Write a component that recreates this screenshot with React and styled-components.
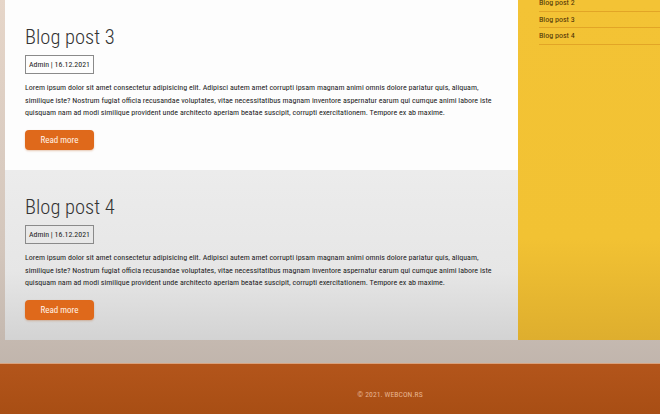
import React from "react";
import styled, { createGlobalStyle } from "styled-components";

const posts = [
  { id: 3, title: "Blog post 3", author: "Admin", date: "16.12.2021", shade: "light" },
  { id: 4, title: "Blog post 4", author: "Admin", date: "16.12.2021", shade: "grey" },
];

const text =
  "Lorem ipsum dolor sit amet consectetur adipisicing elit. Adipisci autem amet corrupti ipsam magnam animi omnis dolore pariatur quis, aliquam, similique iste? Nostrum fugiat officia recusandae voluptates, vitae necessitatibus magnam inventore aspernatur earum qui cumque animi labore iste quisquam nam ad modi similique provident unde architecto aperiam beatae suscipit, corrupti exercitationem. Tempore ex ab maxime.";

const links = ["Blog post 2", "Blog post 3", "Blog post 4"];

const App = () => {
  return (
    <Page>
      <GlobalStyle />
      <Main>
        <Posts>
          {posts.map((p) => (
            <Post key={p.id} shade={p.shade}>
              <Title>{p.title}</Title>
              <Meta>
                {p.author} | {p.date}
              </Meta>
              <Body>{text}</Body>
              <ReadMore>Read more</ReadMore>
            </Post>
          ))}
        </Posts>
        <Sidebar>
          <LinkList>
            {links.map((l) => (
              <LinkItem key={l}>{l}</LinkItem>
            ))}
          </LinkList>
        </Sidebar>
      </Main>
      <Footer>
        <Copy>© 2021. WEBCON.RS</Copy>
      </Footer>
    </Page>
  );
};

const GlobalStyle = createGlobalStyle`
  body {
    margin: 0;
    font-family: "Roboto Condensed", Roboto, "Liberation Sans", sans-serif;
    background: #c0b3a9;
    overflow: hidden;
  }
`;

const Page = styled.div`
  display: flex;
  flex-direction: column;
  width: 660px;
  height: 414px;
  background: linear-gradient(180deg, #e6d6c9 0%, #d3c6bc 60%, #b9aea6 100%);
`;

const Main = styled.div`
  display: flex;
  height: 340px;
  padding-left: 5px;
`;

const Posts = styled.div`
  width: 513px;
  display: flex;
  flex-direction: column;
`;

const Post = styled.article`
  height: 170px;
  box-sizing: border-box;
  padding: 25px 16px 0 20px;
  background: ${(p) =>
    p.shade === "grey"
      ? "linear-gradient(180deg, #ececec 0%, #e6e6e6 60%, #d3d3d3 100%)"
      : "#fdfdfd"};
`;

const Title = styled.h2`
  margin: 0;
  font-size: 20.5px;
  font-weight: 300;
  font-stretch: 75%;
  line-height: 24px;
  color: #333;
`;

const Meta = styled.div`
  display: inline-block;
  margin-top: 6px;
  box-sizing: border-box;
  height: 19px;
  padding: 0 3px;
  border: 1px solid #8a8a8a;
  font-size: 7.9px;
  font-weight: 400;
  line-height: 17px;
  color: #222;
`;

const Body = styled.p`
  margin: 8px 0 0;
  font-size: 8px;
  font-weight: 400;
  line-height: 12.5px;
  color: #222;
`;

const ReadMore = styled.button`
  display: block;
  margin-top: 10px;
  width: 69px;
  height: 20px;
  border: none;
  border-radius: 4px;
  background: #df691b;
  color: #fff3e8;
  font-family: inherit;
  font-size: 9px;
  font-weight: 400;
  padding: 0;
  box-shadow: 0 1px 2px rgba(180, 80, 10, 0.3);
`;

const Sidebar = styled.aside`
  flex: 1;
  background: linear-gradient(180deg, #f3c335 0%, #f2c233 70%, #deae2e 100%);
  overflow: hidden;
`;

const LinkList = styled.ul`
  list-style: none;
  margin: -5px 0 0;
  padding: 0 0 0 21px;
`;

const LinkItem = styled.li`
  height: 16.5px;
  box-sizing: border-box;
  border-bottom: 1.5px solid #e2a526;
  font-size: 8px;
  font-weight: 400;
  line-height: 15px;
  color: #4a3005;
`;

const Footer = styled.footer`
  margin-top: 23px;
  flex: 1;
  display: flex;
  align-items: center;
  justify-content: center;
  padding: 10px 0 0 120px;
  border-top: 1.5px solid #d9a27e;
  background: linear-gradient(180deg, #b3551b 0%, #a84e14 100%);
`;

const Copy = styled.div`
  font-size: 7.6px;
  font-weight: 400;
  color: #e7b48f;
  letter-spacing: 0.1px;
`;

export default App;
